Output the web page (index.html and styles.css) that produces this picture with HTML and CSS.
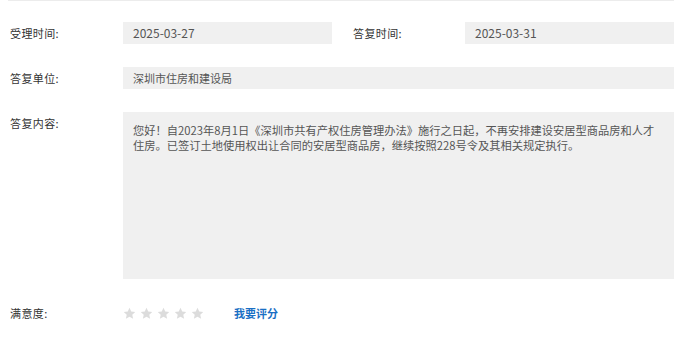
FILE: index.html
```html
<!DOCTYPE html>
<html lang="zh-CN">
<head>
<meta charset="utf-8">
<title>答复详情</title>
<link rel="stylesheet" href="styles.css">
</head>
<body>
<div class="topline"></div>
<div class="detail">
  <div class="row">
    <div class="label">受理时间:</div>
    <div class="field field-half date">2025-03-27</div>
    <div class="label label-second">答复时间:</div>
    <div class="field field-half date">2025-03-31</div>
  </div>
  <div class="row">
    <div class="label">答复单位:</div>
    <div class="field field-full">深圳市住房和建设局</div>
  </div>
  <div class="row">
    <div class="label">答复内容:</div>
    <div class="field field-full content">您好！自2023年8月1日《深圳市共有产权住房管理办法》施行之日起，不再安排建设安居型商品房和人才住房。已签订土地使用权出让合同的安居型商品房，继续按照228号令及其相关规定执行。</div>
  </div>
  <div class="row">
    <div class="label">满意度:</div>
    <div class="rating">
      <div class="stars">
        <svg class="star" viewBox="0 0 24 24"><path d="M12 1.5l3.2 6.9 7.4.8-5.5 5 1.6 7.4L12 17.8l-6.7 3.8 1.6-7.4-5.5-5 7.4-.8z"/></svg>
        <svg class="star" viewBox="0 0 24 24"><path d="M12 1.5l3.2 6.9 7.4.8-5.5 5 1.6 7.4L12 17.8l-6.7 3.8 1.6-7.4-5.5-5 7.4-.8z"/></svg>
        <svg class="star" viewBox="0 0 24 24"><path d="M12 1.5l3.2 6.9 7.4.8-5.5 5 1.6 7.4L12 17.8l-6.7 3.8 1.6-7.4-5.5-5 7.4-.8z"/></svg>
        <svg class="star" viewBox="0 0 24 24"><path d="M12 1.5l3.2 6.9 7.4.8-5.5 5 1.6 7.4L12 17.8l-6.7 3.8 1.6-7.4-5.5-5 7.4-.8z"/></svg>
        <svg class="star" viewBox="0 0 24 24"><path d="M12 1.5l3.2 6.9 7.4.8-5.5 5 1.6 7.4L12 17.8l-6.7 3.8 1.6-7.4-5.5-5 7.4-.8z"/></svg>
      </div>
      <a class="rate-link" href="#">我要评分</a>
    </div>
  </div>
</div>
</body>
</html>
```
FILE: styles.css
```css
html, body {
  margin: 0;
  padding: 0;
  background: #ffffff;
}
body {
  font-family: "Noto Sans CJK SC", "Noto Sans", sans-serif;
  font-size: 11px;
  color: #333333;
}
.topline {
  margin: 0 26px 0 8px;
  height: 1px;
  background: #ececec;
}
.detail {
  margin-left: 10px;
  width: 664px;
  padding-top: 21px;
  display: flex;
  flex-direction: column;
  gap: 23px;
}
.row {
  display: flex;
  align-items: flex-start;
}
.label {
  width: 113px;
  flex: none;
  height: 22px;
  line-height: 22px;
  color: #333333;
  letter-spacing: 0.4px;
}
.label-second {
  margin-left: 21px;
  width: 112px;
}
.field {
  background: #f0f0f0;
  color: #555555;
  height: 22px;
  line-height: 22px;
  padding: 0 10px;
  box-sizing: border-box;
}
.field-half {
  width: 209px;
}
.field-full {
  width: 551px;
}
.date {
  font-size: 12px;
}
.content {
  height: 167px;
  font-size: 11.25px;
  line-height: 15px;
  padding: 11px 14px 11px 10px;
}
.rating {
  display: flex;
  align-items: center;
  height: 22px;
  gap: 30px;
}
.stars {
  display: flex;
  gap: 4px;
}
.star {
  width: 13px;
  height: 13px;
  fill: #dcdcdc;
}
.rate-link {
  color: #1a6fc4;
  font-weight: bold;
  text-decoration: none;
}
```
